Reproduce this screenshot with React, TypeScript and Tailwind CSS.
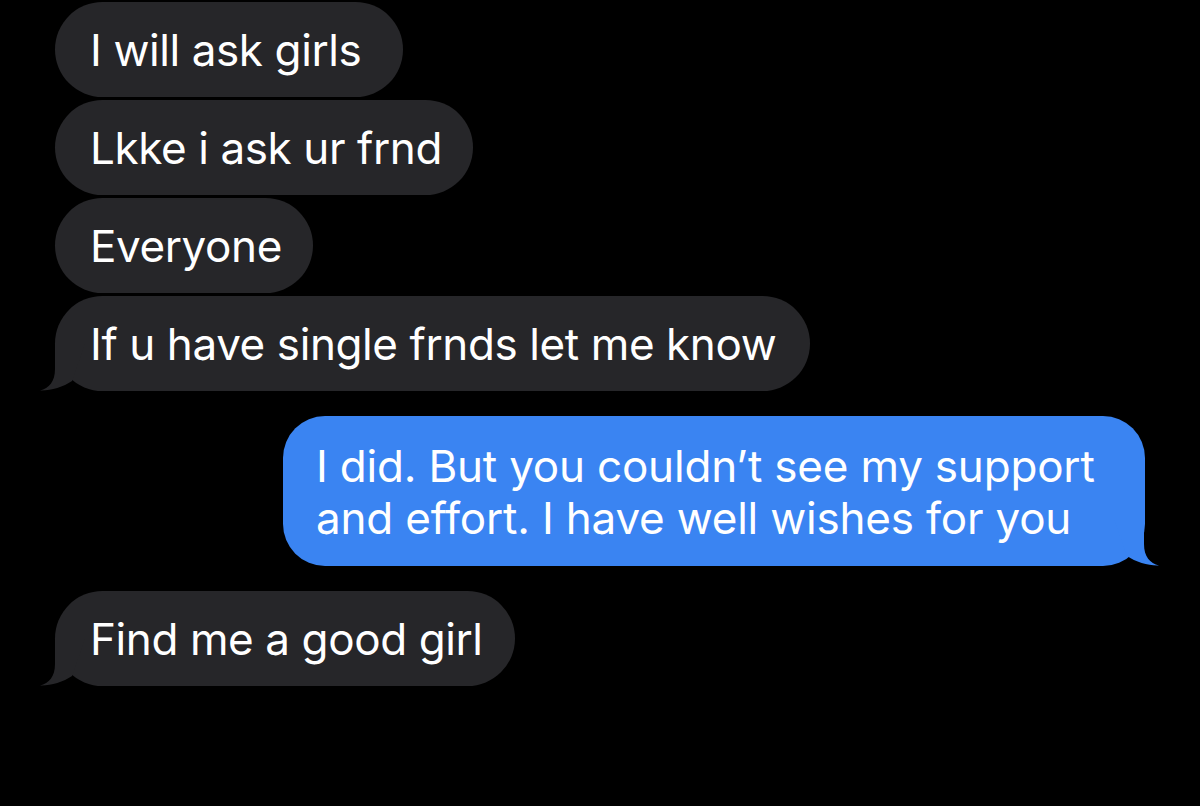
const font = { fontFamily: "Inter, 'Noto Sans', 'Liberation Sans', sans-serif" };

function Tail({ color, side }: { color: string; side: "left" | "right" }) {
  return (
    <svg
      width="50"
      height="50"
      viewBox="0 0 50 50"
      className={
        side === "left"
          ? "absolute bottom-0 left-[-15px]"
          : "absolute bottom-0 right-[-14px] -scale-x-100"
      }
    >
      <path d="M15 3 L15 28 C15 41 9 47 0 49.5 C10 50 23 46 32 40 L45 3 Z" fill={color} />
    </svg>
  );
}

function Incoming({ text, width, tail }: { text: string; width: string; tail?: boolean }) {
  return (
    <div className={`relative ${width} h-[95px] rounded-full bg-[#262629] pl-[35px] flex items-center`}>
      {tail && <Tail color="#262629" side="left" />}
      <span className="relative text-white text-[44px] leading-[50px] whitespace-nowrap tracking-[-0.4px]">{text}</span>
    </div>
  );
}

export default function App() {
  return (
    <div className="w-[1200px] h-[806px] bg-black overflow-hidden" style={font}>
      <div className="flex flex-col pt-[2px] pl-[55px]">
        <div className="flex flex-col gap-[3px]">
          <Incoming text="I will ask girls" width="w-[348px]" />
          <Incoming text="Lkke i ask ur frnd" width="w-[418px]" />
          <Incoming text="Everyone" width="w-[258px]" />
          <Incoming text="If u have single frnds let me know" width="w-[755px]" tail />
        </div>

        <div className="flex justify-end pr-[55px] mt-[25px]">
          <div className="relative w-[862px] h-[150px] rounded-[42px] bg-[#3a84f2] pl-[33px] pt-[24px]">
            <Tail color="#3a84f2" side="right" />
            <p className="relative text-white text-[44px] leading-[52px] whitespace-nowrap tracking-[-0.2px]">
              <span className="block">I did. But you couldn’t see my support</span>
              <span className="block">and effort. I have well wishes for you</span>
            </p>
          </div>
        </div>

        <div className="mt-[25px]">
          <Incoming text="Find me a good girl" width="w-[460px]" tail />
        </div>
      </div>
    </div>
  );
}
